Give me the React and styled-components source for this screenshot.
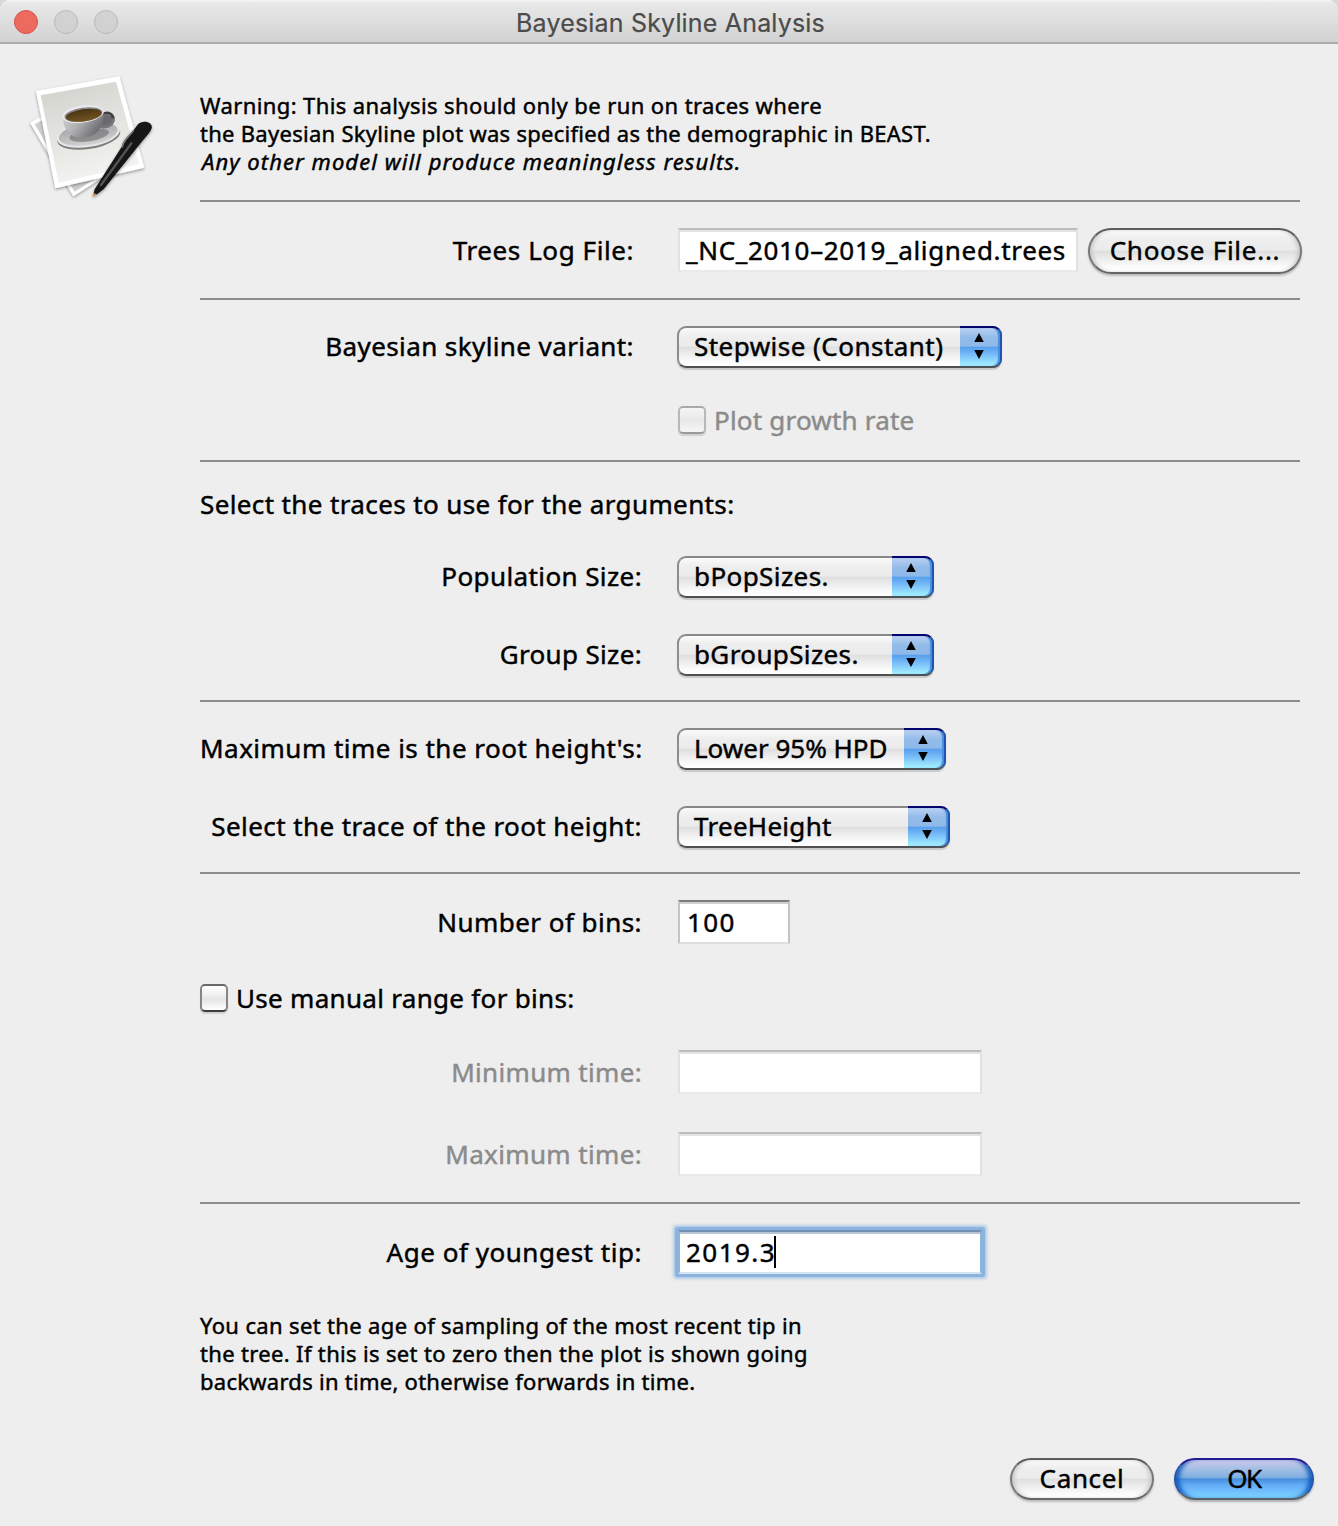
import React from "react";
import styled, { createGlobalStyle, css } from "styled-components";

const Global = createGlobalStyle`
  * { box-sizing: border-box; }
  body { margin: 0; background: #eeeeee; }
`;

const Window = styled.div`
  width: 1338px;
  height: 1526px;
  display: flex;
  flex-direction: column;
  background: #eeeeee;
  color: #000;
  font-family: "Noto Sans", "Open Sans", sans-serif;
  font-size: 26px;
  line-height: 36px;
  -webkit-text-stroke: 0.45px currentColor;
  overflow: hidden;
`;

const TitleBar = styled.header`
  display: grid;
  grid-template-columns: 200px 1fr 200px;
  align-items: center;
  height: 44px;
  flex: none;
  border-radius: 10px 10px 0 0;
  border-bottom: 2px solid #acacac;
  background: linear-gradient(#f6f6f6 0, #e8e8e8 3px, #d2d2d2 100%);
  box-shadow: 0 -10px 0 #d8d8d8;
`;

const Lights = styled.div`
  display: flex;
  gap: 16px;
  padding: 1px 0 0 14px;
`;

const Light = styled.span`
  width: 24px;
  height: 24px;
  border-radius: 50%;
  border: 1.5px solid ${(p) => (p.$active ? "#d9534b" : "#bababa")};
  background: ${(p) => (p.$active ? "#ed6a5e" : "#d2d2d2")};
`;

const Title = styled.h1`
  margin: 0;
  text-align: center;
  font: 400 25px/36px Inter, sans-serif;
  letter-spacing: 0.18px;
  color: #4b4b4b;
  padding: 4px 0 0 3px;
  -webkit-text-stroke: 0.2px currentColor;
`;

const Body = styled.main`
  display: grid;
  grid-template-columns: 180px 1100px;
  padding-left: 20px;
`;

const IconCell = styled.div`
  padding-top: 21px;
`;

const Section = styled.section`
  display: flex;
  flex-direction: column;
  height: ${(p) => p.$h}px;
  padding-top: ${(p) => p.$pt}px;
  border-bottom: ${(p) => (p.$last ? "none" : "2px solid #8c8c8c")};
`;

const Row = styled.div`
  display: grid;
  grid-template-columns: ${(p) => p.$label || 442}px 1fr;
  column-gap: ${(p) => 478 - (p.$label || 442)}px;
  align-items: center;
  height: 44px;
  flex: none;
  margin-top: ${(p) => p.$before || 0}px;
`;

const Text = styled.span`
  display: block;
  white-space: nowrap;
  letter-spacing: ${(p) => p.$track || 0}px;
  color: ${(p) => (p.$dim ? "#8b8b8b" : "inherit")};
`;

const Label = styled(Text)`
  text-align: right;
  padding-bottom: ${(p) => (p.$lift ? 2 : 0)}px;
`;

const Note = styled(Text)`
  font-size: 22px;
  line-height: 28px;
  padding-left: ${(p) => (p.$italic ? 2 : 0)}px;
  font-style: ${(p) => (p.$italic ? "italic" : "normal")};
`;

const Controls = styled.div`
  display: flex;
  align-items: flex-start;
  height: 44px;
  gap: 10px;
`;

const Field = styled.div`
  display: flex;
  align-items: center;
  width: ${(p) => p.$w}px;
  height: 44px;
  padding: 0 0 1px ${(p) => p.$pl || 7}px;
  background: #fff;
  border: 2px solid;
  border-color: ${(p) =>
    p.$soft ? "#bcbcbc #e1e1e1 #eaeaea" : "#7c7c7c #c4c4c4 #dedede"};
  box-shadow: inset 0 2px 0 ${(p) => (p.$soft ? "#e3e3e3" : "#d0d0d0")};
  ${(p) =>
    p.$focus &&
    css`
      border-color: #7390b4 #8eb4da #d5e4f3;
      box-shadow: inset 0 2px 0 #b7c5d6, 0 0 0 3px #8ab3dd, 0 0 3px 5px #b0cbe6;
      border-radius: 1px;
    `}
`;

const Caret = styled.span`
  width: 2px;
  height: 32px;
  margin-left: -2px;
  background: #000;
`;

const glossy = css`
  background: linear-gradient(
    #fafafa 0,
    #eeeeee 22%,
    #ebebeb 48%,
    #dedede 50%,
    #e9e9e9 64%,
    #fbfbfb 88%,
    #ffffff 100%
  );
`;

const Combo = styled.div`
  display: flex;
  align-items: stretch;
  width: ${(p) => p.$w}px;
  height: 42px;
  margin-left: -1px;
  border: 2px solid;
  border-color: #888 #8e8e8e #505050;
  border-radius: 9px;
  box-shadow: 0 2px 1px #c8c8c8;
  ${glossy}
  background-clip: padding-box;
`;

const ComboText = styled(Text)`
  flex: 1;
  padding-left: ${(p) => p.$pl || 15}px;
  line-height: 37px;
`;

const Stepper = styled.span`
  display: flex;
  flex-direction: column;
  align-items: center;
  justify-content: center;
  width: 42px;
  margin: -2px -2px -2px 0;
  padding: 0 3px 2px 0;
  border: 2px solid;
  border-left: 0;
  border-color: #04046e #1c55b4 #4c5358;
  border-radius: 0 9px 9px 0;
  background: linear-gradient(
    #b9d0f0 0,
    #93bbe9 25%,
    #8fb9ea 48%,
    #579fec 50%,
    #74b8f8 68%,
    #a5f2ff 100%
  );
  box-shadow: inset -2px 0 1px #4a8edb;
`;

const Pill = styled.button`
  width: ${(p) => p.$w}px;
  height: ${(p) => p.$h}px;
  padding: 0 0 3px;
  border: 2px solid;
  border-color: #5c5c5c #777 #666;
  border-radius: 23px;
  font: inherit;
  line-height: 36px;
  letter-spacing: ${(p) => p.$track || 0}px;
  color: #000;
  -webkit-text-stroke: inherit;
  white-space: nowrap;
  flex: none;
  box-shadow: 0 2px 2px #bdbdbd, inset 4px 0 4px -2px #c4c4c4,
    inset -4px 0 4px -2px #c4c4c4;
  ${glossy}
  ${(p) =>
    p.$primary &&
    css`
      border-color: #241b93 #2456ab #595f66;
      box-shadow: 0 2px 2px #b0b0b0, inset 6px 0 5px -3px #0b56b8,
        inset -6px 0 5px -3px #0b56b8;
      background: linear-gradient(
        #d0c9ec 0,
        #a6c0e5 22%,
        #7fafe2 46%,
        #468fdd 50%,
        #66aefa 68%,
        #7dd4ff 100%
      );
    `}
`;

const Check = styled.span`
  width: 28px;
  height: 28px;
  flex: none;
  border: 2px solid;
  border-color: ${(p) =>
    p.$dim ? "#aaa #b8b8b8 #9a9a9a" : "#696969 #858585 #3c3c3c"};
  border-radius: 5px;
  background: ${(p) =>
    p.$dim
      ? "linear-gradient(#f5f5f5, #e8e8e8 50%, #f6f6f6)"
      : "linear-gradient(#fff, #ececec 45%, #e4e4e4 55%, #fff)"};
  box-shadow: 0 2px 1px #d0d0d0;
`;

const CheckLine = styled.div`
  display: flex;
  align-items: center;
  gap: 8px;
  height: 44px;
  flex: none;
  padding-bottom: ${(p) => (p.$lift ? 2 : 0)}px;
  margin-top: ${(p) => p.$before || 0}px;
`;

const Help = styled.div`
  margin-top: 37px;
`;

const Footer = styled.footer`
  display: flex;
  justify-content: flex-end;
  gap: 20px;
  margin-top: auto;
  padding: 0 24px 26px 0;
`;

function Select({ w, track, pl, children }) {
  return (
    <Combo $w={w}>
      <ComboText $track={track} $pl={pl}>{children}</ComboText>
      <Stepper>
        <svg width="12" height="26" viewBox="0 0 12 26">
          <path d="M6 0 L10.8 9 H1.2 Z M1.2 17 H10.8 L6 26 Z" fill="#000" />
        </svg>
      </Stepper>
    </Combo>
  );
}

function AppIcon() {
  return (
    <svg width="150" height="145" viewBox="0 0 450 435">
      <defs>
        <linearGradient id="paper" x1="0" y1="0" x2="0.3" y2="1">
          <stop offset="0" stopColor="#d0d0cb" />
          <stop offset="0.45" stopColor="#e0e0dc" />
          <stop offset="1" stopColor="#f2f2f0" />
        </linearGradient>
        <linearGradient id="cup" x1="0" y1="0" x2="1" y2="0.5">
          <stop offset="0" stopColor="#d6d6d8" />
          <stop offset="0.5" stopColor="#b0b0b3" />
          <stop offset="1" stopColor="#6c6c6f" />
        </linearGradient>
        <linearGradient id="saucer" x1="0" y1="0" x2="0" y2="1">
          <stop offset="0" stopColor="#a0a0a2" />
          <stop offset="1" stopColor="#d2d2d3" />
        </linearGradient>
        <linearGradient id="coffee" x1="0" y1="0" x2="0" y2="1">
          <stop offset="0" stopColor="#4a3412" />
          <stop offset="1" stopColor="#735422" />
        </linearGradient>
        <filter id="shadow" x="-10%" y="-10%" width="120%" height="125%">
          <feDropShadow dx="0" dy="4" stdDeviation="4" floodOpacity="0.4" />
        </filter>
      </defs>
      <g filter="url(#shadow)">
        <path d="M30 173 L180 90 L312 296 L160 394 Z" fill="#fff" />
        <path d="M44 178 L180 104 L298 294 L164 380 Z" fill="#cfcfcf" />
      </g>
      <g filter="url(#shadow)">
        <path d="M48 78 L298 34 L373 308 L106 370 Z" fill="#fff" />
      </g>
      <path d="M62 91 L288 50 L357 298 L116 353 Z" fill="url(#paper)" />
      <g transform="rotate(-9 205 208)">
        <ellipse cx="205" cy="214" rx="96" ry="38" fill="#7d7d7d" />
        <ellipse cx="205" cy="208" rx="96" ry="38" fill="#e6e6e6" />
        <ellipse cx="205" cy="207" rx="89" ry="33" fill="url(#saucer)" />
        <ellipse cx="207" cy="211" rx="60" ry="18" fill="#6b6b6e" opacity="0.6" />
      </g>
      <path d="M244 152 C272 138 289 156 277 174 C269 187 250 188 241 184 Z" fill="#6a6a6d" stroke="#77777a" strokeWidth="8" />
      <path d="M245 148 C267 137 280 148 278 160" fill="none" stroke="#3f3f41" strokeWidth="7" />
      <path d="M128 157 C130 183 140 207 166 216 C190 222 219 214 235 197 C247 183 252 165 250 139 Z" fill="url(#cup)" />
      <g transform="rotate(-8 189 148)">
        <ellipse cx="189" cy="147" rx="63" ry="26" fill="#e9e9e9" />
        <ellipse cx="190" cy="149" rx="57" ry="21" fill="#85858a" />
        <ellipse cx="191" cy="151" rx="54" ry="18" fill="url(#coffee)" />
      </g>
      <g filter="url(#shadow)">
        <path d="M219 394 L224 373 L313 233 L354 178 C368 163 400 171 395 190 C391 202 381 212 367 228 L252 371 L233 386 Z" fill="#141414" />
        <path d="M243 360 L334 235" stroke="#555" strokeWidth="7" strokeLinecap="round" />
        <path d="M307 246 C309 224 327 215 340 197" fill="none" stroke="#777" strokeWidth="5" strokeLinecap="round" />
        <path d="M217 395 L220 384 L230 388 Z" fill="#e59a4e" />
      </g>
    </svg>
  );
}

export default function App() {
  return (
    <Window>
      <Global />
      <TitleBar>
        <Lights>
          <Light $active />
          <Light />
          <Light />
        </Lights>
        <Title>Bayesian Skyline Analysis</Title>
      </TitleBar>
      <Body>
        <IconCell>
          <AppIcon />
        </IconCell>
        <div>
          <Section $h={158} $pt={47}>
            <Note $track={0.4}>Warning: This analysis should only be run on traces where</Note>
            <Note $track={0.28}>the Bayesian Skyline plot was specified as the demographic in BEAST.</Note>
            <Note $italic $track={1.06}>Any other model will produce meaningless results.</Note>
          </Section>
          <Section $h={98} $pt={26}>
            <Row $label={434}>
              <Label $track={0.58}>Trees Log File:</Label>
              <Controls>
                <Field $w={400} $soft $pl={6}>
                  <Text $track={0.67}>_NC_2010–2019_aligned.trees</Text>
                </Field>
                <Pill $w={214} $h={46} $track={0.74}>Choose File...</Pill>
              </Controls>
            </Row>
          </Section>
          <Section $h={162} $pt={25}>
            <Row $label={434}>
              <Label $lift $track={0.4}>Bayesian skyline variant:</Label>
              <Select w={325} track={0.47}>Stepwise (Constant)</Select>
            </Row>
            <Row $before={30}>
              <span />
              <CheckLine $lift>
                <Check $dim />
                <Text $dim $track={0.2}>Plot growth rate</Text>
              </CheckLine>
            </Row>
          </Section>
          <Section $h={240} $pt={21}>
            <CheckLine $lift>
              <Text $track={0.38}>Select the traces to use for the arguments:</Text>
            </CheckLine>
            <Row $before={28}>
              <Label $lift $track={0.4}>Population Size:</Label>
              <Select w={257} track={0.42}>bPopSizes.</Select>
            </Row>
            <Row $before={34}>
              <Label $lift $track={0.34}>Group Size:</Label>
              <Select w={257} track={0.38}>bGroupSizes.</Select>
            </Row>
          </Section>
          <Section $h={172} $pt={25}>
            <Row>
              <Label $lift $track={0.48}>Maximum time is the root height's:</Label>
              <Select w={269} track={0.0}>Lower 95% HPD</Select>
            </Row>
            <Row $before={34}>
              <Label $lift $track={0.41}>Select the trace of the root height:</Label>
              <Select w={273} track={0.29}>TreeHeight</Select>
            </Row>
          </Section>
          <Section $h={330} $pt={26}>
            <Row>
              <Label $track={0.46}>Number of bins:</Label>
              <Field $w={112}>
                <Text $track={1.4}>100</Text>
              </Field>
            </Row>
            <CheckLine $before={32}>
              <Check />
              <Text $track={0.3}>Use manual range for bins:</Text>
            </CheckLine>
            <Row $before={30}>
              <Label $dim $track={0.33}>Minimum time:</Label>
              <Field $w={304} $soft />
            </Row>
            <Row $before={38}>
              <Label $dim $track={0.36}>Maximum time:</Label>
              <Field $w={304} $soft />
            </Row>
          </Section>
          <Section $h={200} $pt={26} $last>
            <Row>
              <Label $track={0.53}>Age of youngest tip:</Label>
              <Field $w={304} $focus $pl={6}>
                <Text $track={1.45}>2019.3</Text>
                <Caret />
              </Field>
            </Row>
            <Help>
              <Note $track={0.35}>You can set the age of sampling of the most recent tip in</Note>
              <Note $track={0.34}>the tree. If this is set to zero then the plot is shown going</Note>
              <Note $track={0.27}>backwards in time, otherwise forwards in time.</Note>
            </Help>
          </Section>
        </div>
      </Body>
      <Footer>
        <Pill $w={144} $h={42} $track={0.65}>Cancel</Pill>
        <Pill $w={140} $h={42} $track={-1.5} $primary>OK</Pill>
      </Footer>
    </Window>
  );
}
